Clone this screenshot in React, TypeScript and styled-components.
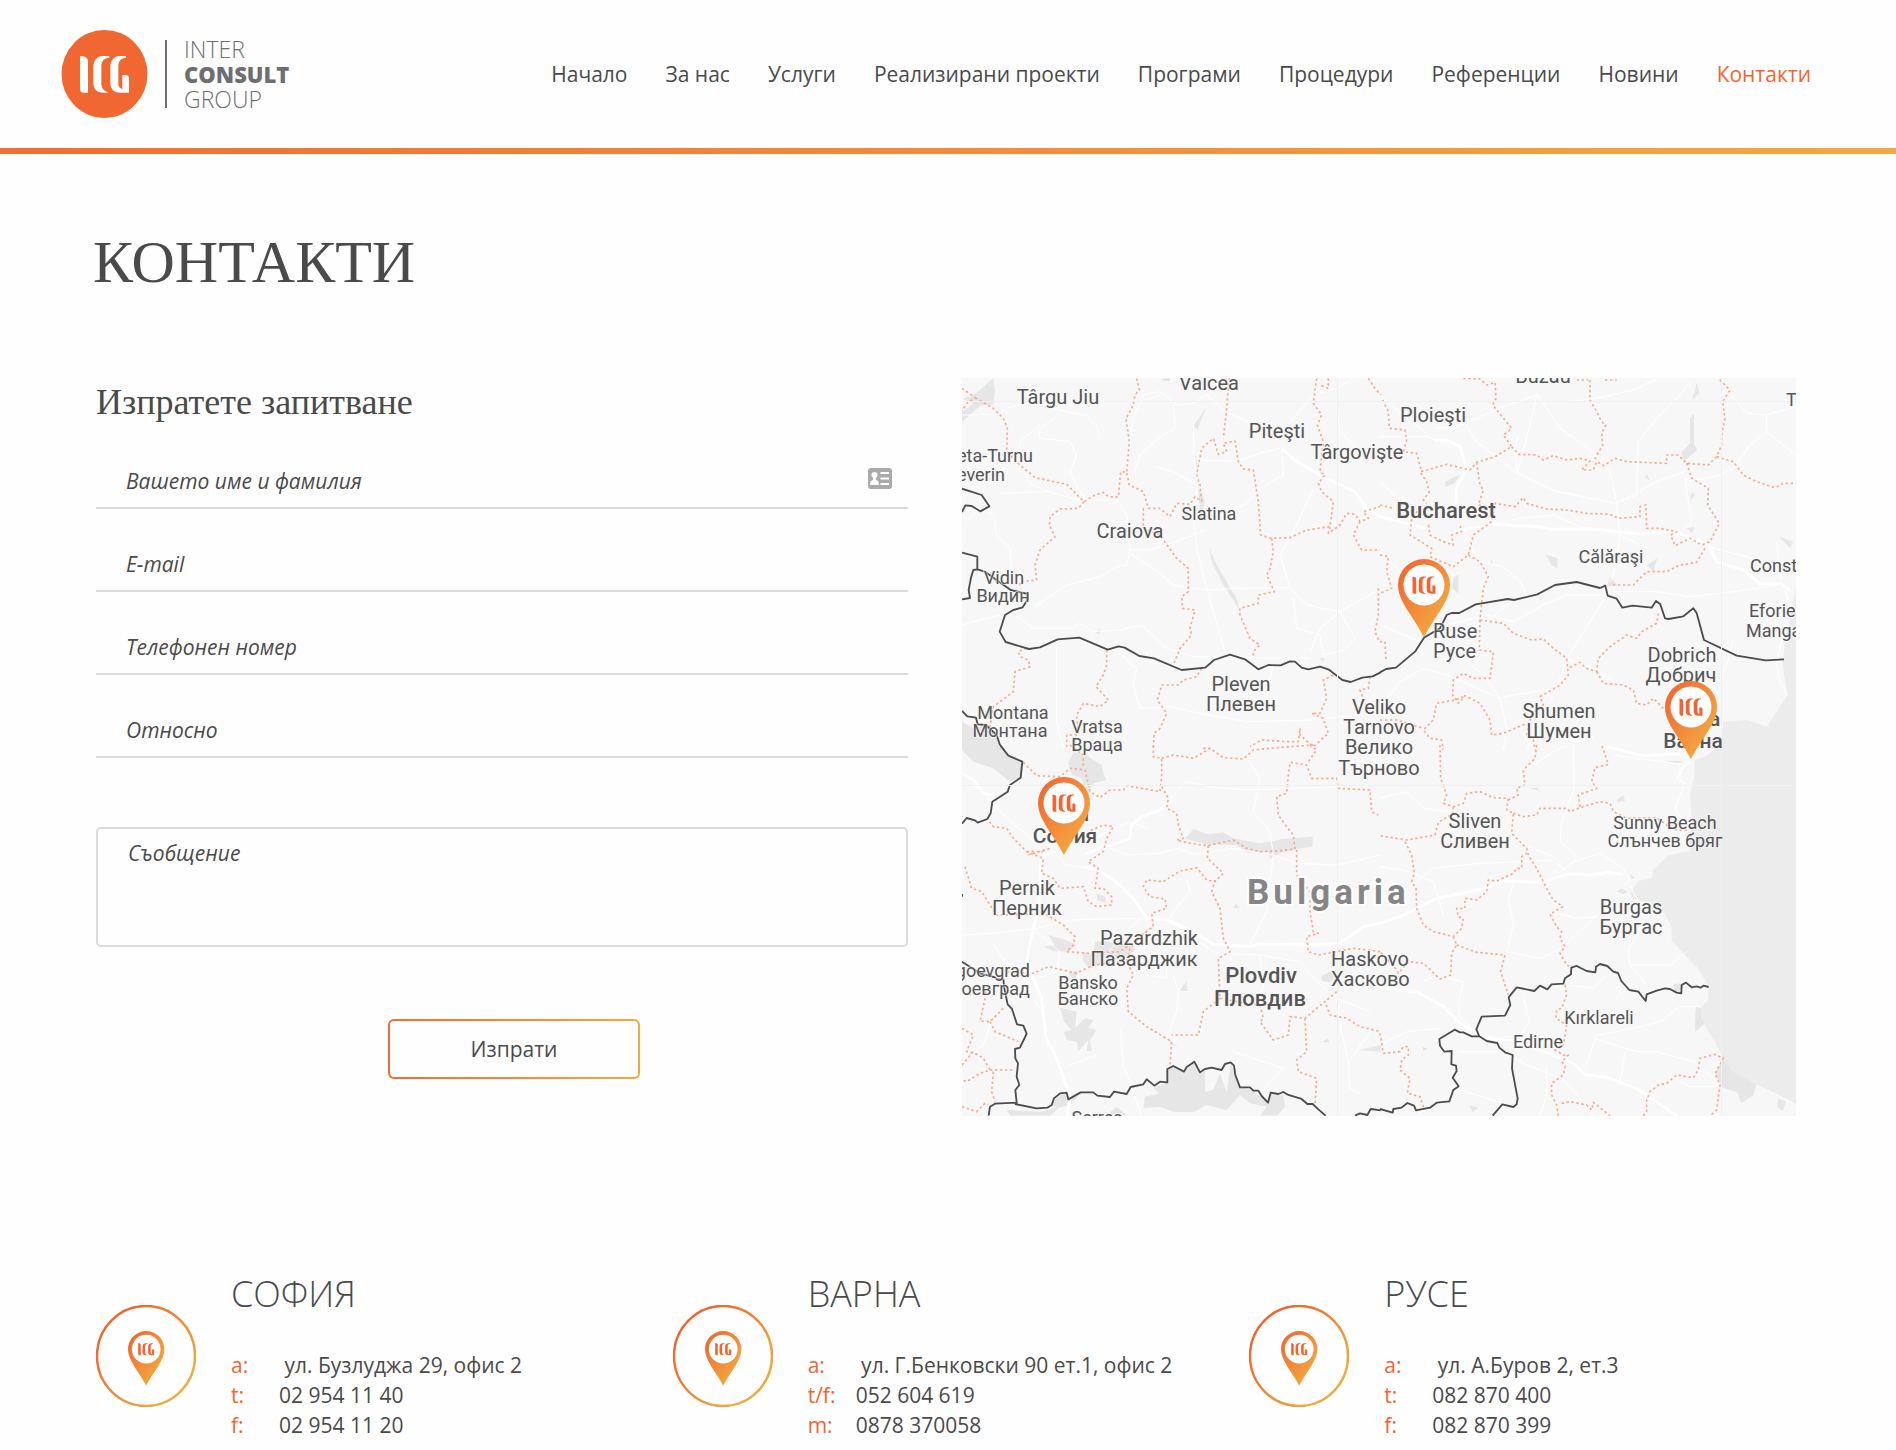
import React from "react";
import styled, { createGlobalStyle } from "styled-components";

const ink = "#4a4a4a";
const accent = "#f26531";
const line = "#dadada";
const sans = `"Open Sans", "Noto Sans", sans-serif`;
const serif = `"Liberation Serif", serif`;

const GlobalStyle = createGlobalStyle`
  *, *::before, *::after { box-sizing: border-box; }
  body {
    margin: 0;
    background: #fefefe;
    color: ${ink};
    font: 400 21px/30px ${sans};
  }
`;

const Header = styled.header`
  display: flex;
  align-items: center;
  justify-content: space-between;
  gap: 36px;
  min-height: 148px;
  padding: 0 85px 0 61px;
`;

const Rule = styled.div`
  height: 6px;
  background: linear-gradient(90deg, #f16d31, #f3a93f);
`;

const LogoLink = styled.a`
  display: flex;
  align-items: center;
  color: #6d6e72;
  text-decoration: none;
`;

const LogoBar = styled.span`
  width: 2px;
  height: 68px;
  margin: 0 17px;
  background: #6d6e72;
`;

const LogoWords = styled.span`
  display: flex;
  flex-direction: column;
  line-height: 25px;
`;

const LogoWord = styled.span<{ $heavy?: boolean }>`
  font-size: ${(p) => (p.$heavy ? 22 : 23)}px;
  font-weight: ${(p) => (p.$heavy ? 800 : 300)};
`;

const NavList = styled.ul`
  display: flex;
  flex-wrap: wrap;
  gap: 8px 38px;
  margin: 0;
  padding: 0;
  list-style: none;
`;

const NavLink = styled.a<{ $active?: boolean }>`
  color: ${(p) => (p.$active ? accent : ink)};
  text-decoration: none;
`;

const PageTitle = styled.h1`
  margin: 0;
  padding: 72px 93px 0;
  font: 400 60px/72px ${serif};
`;

const ContactArea = styled.section`
  display: grid;
  grid-template-columns: 812fr 834fr;
  gap: 54px;
  align-items: start;
  padding: 80px 100px 0 96px;
`;

const Form = styled.form`
  display: flex;
  flex-direction: column;
`;

const FormTitle = styled.h2`
  margin: 0;
  font: 400 36px/48px ${serif};
`;

const Field = styled.div`
  position: relative;
  display: flex;
  align-items: flex-end;
  height: 83px;
  padding: 0 16px 11px 30px;
  border-bottom: 2px solid ${line};
`;

const MessageField = styled.div`
  position: relative;
  display: flex;
  margin-top: 69px;
`;

/* Prompt that lies over an empty control and goes once there is a value. */
const Prompt = styled.label<{ $multiline?: boolean }>`
  position: absolute;
  left: ${(p) => (p.$multiline ? 32 : 30)}px;
  ${(p) => (p.$multiline ? "top: 11px;" : "bottom: 11px;")}
  font-style: italic;
  pointer-events: none;
`;

const Input = styled.input`
  flex: 1;
  min-width: 0;
  height: 30px;
  padding: 0;
  border: 0;
  outline: 0;
  background: none;
  color: ${ink};
  font: italic 400 21px/30px ${sans};
  &:not(:placeholder-shown) + label { visibility: hidden; }
`;

const FieldIcon = styled.svg`
  flex: none;
  width: 24px;
  height: 21px;
  margin-bottom: 7px;
`;

const Message = styled.textarea`
  flex: 1;
  height: 120px;
  padding: 9px 30px;
  border: 2px solid ${line};
  border-radius: 5px;
  outline: 0;
  resize: none;
  background: none;
  color: ${ink};
  font: italic 400 21px/30px ${sans};
  &:not(:placeholder-shown) + label { visibility: hidden; }
`;

const SendButton = styled.button`
  align-self: center;
  width: 252px;
  height: 60px;
  margin: 72px 0 0 24px;
  border: 2px solid transparent;
  border-radius: 6px;
  background:
    linear-gradient(#fefefe, #fefefe) padding-box,
    linear-gradient(90deg, #f16d31, #f3a93f) border-box;
  color: ${ink};
  font: 400 21px/30px ${sans};
  cursor: pointer;
`;

const MapSvg = styled.svg`
  display: block;
  width: 100%;
  height: auto;
  background: #f7f7f7;
`;

const Offices = styled.section`
  display: grid;
  grid-template-columns: repeat(3, 1fr);
  gap: 30px;
  padding: 154px 100px 8px 96px;
`;

const Office = styled.article`
  display: flex;
  align-items: flex-start;
  gap: 35px;
`;

const OfficeIcon = styled.svg`
  flex: none;
  width: 100px;
  height: 102px;
  margin-top: 35px;
`;

const OfficeName = styled.h3`
  margin: 0 0 32px;
  font: 300 36px/48px ${sans};
`;

const Details = styled.dl`
  display: grid;
  grid-template-columns: 48px auto;
  margin: 0;
`;

const Term = styled.dt`
  color: ${accent};
`;

const Value = styled.dd`
  margin: 0;
  white-space: pre;
`;

function Monogram() {
  return (
    <>
      <path d="M0 1C14 0 24 4 24 17V110H12C4 110 0 106 0 98Z" />
      <path d="M88 0H70C50 0 40 14 40 34V80C40 98 50 110 70 110H85C71 104 64 96 64 82V30C64 14 74 6 88 5Z" />
      <path d="M138 0H122C101 0 91 14 91 34V80C91 98 101 110 121 110H147V66C147 60 143 57 137 57H127V99C119 97 115 92 115 82V30C115 14 124 6 138 5Z" />
    </>
  );
}

function PinShape({ gradient }: { gradient: string }) {
  return (
    <>
      <path
        d="M26 0A26 26 0 0 1 52 26C52 42 37 57 26 78C15 57 0 42 0 26A26 26 0 0 1 26 0Z"
        fill={`url(#${gradient})`}
      />
      <circle cx="26" cy="26" r="20.500" fill="#fff" />
      <g transform="translate(14.500 17.500) scale(.156)" fill={accent}>
        <Monogram />
      </g>
    </>
  );
}

function PinGradient({ id }: { id: string }) {
  return (
    <linearGradient id={id} x1="0" y1="0" x2="1" y2="1">
      <stop offset="0.1" stopColor="#f16a31" />
      <stop offset="0.8" stopColor="#f3a640" />
    </linearGradient>
  );
}

type Anchor = "start" | "middle" | "end";
type Label = [string, number, number, number, Anchor?, boolean?];

const labels: Label[] = [
  ["Târgu Jiu", 96, 26, 20],
  ["Vâlcea", 247, 12, 20],
  ["Piteşti", 315, 60, 20],
  ["Târgovişte", 395, 81, 20],
  ["Ploieşti", 471, 44, 20],
  ["Buzău", 581, 5, 20],
  ["T", 824, 28, 18, "start"],
  ["eta-Turnu", 71, 84, 18, "end"],
  ["everin", 43, 103, 18, "end"],
  ["Slatina", 247, 142, 18],
  ["Craiova", 168, 160, 20],
  ["Bucharest", 484, 140, 22, "middle", true],
  ["Călăraşi", 649, 185, 18],
  ["Const", 788, 194, 18, "start"],
  ["Eforie", 787, 239, 18, "start"],
  ["Manga", 784, 259, 18, "start"],
  ["Vidin", 42, 206, 18],
  ["Видин", 41, 224, 18],
  ["Ruse", 471, 260, 20, "start"],
  ["Русе", 471, 280, 20, "start"],
  ["Dobrich", 720, 284, 20],
  ["Добрич", 719, 304, 20],
  ["Pleven", 279, 313, 20],
  ["Плевен", 279, 333, 20],
  ["Montana", 51, 341, 18],
  ["Монтана", 48, 359, 18],
  ["Vratsa", 135, 355, 18],
  ["Враца", 135, 373, 18],
  ["Veliko", 417, 336, 20],
  ["Tarnovo", 417, 356, 20],
  ["Велико", 417, 376, 20],
  ["Търново", 417, 397, 20],
  ["Shumen", 597, 340, 20],
  ["Шумен", 597, 360, 20],
  ["Varna", 731, 348, 21, "middle", true],
  ["Варна", 731, 370, 21, "middle", true],
  ["Sofia", 103, 443, 21, "middle", true],
  ["София", 103, 465, 21, "middle", true],
  ["Sliven", 513, 450, 20],
  ["Сливен", 513, 470, 20],
  ["Sunny Beach", 703, 451, 18],
  ["Слънчев бряг", 703, 469, 18],
  ["Burgas", 669, 536, 20],
  ["Бургас", 669, 556, 20],
  ["Pernik", 65, 517, 20],
  ["Перник", 65, 537, 20],
  ["Pazardzhik", 187, 567, 20],
  ["Пазарджик", 182, 588, 20],
  ["goevgrad", 68, 599, 18, "end"],
  ["оевград", 68, 617, 18, "end"],
  ["Bansko", 126, 611, 18],
  ["Банско", 126, 627, 18],
  ["Plovdiv", 299, 605, 22, "middle", true],
  ["Пловдив", 298, 628, 22, "middle", true],
  ["Haskovo", 369, 588, 20, "start"],
  ["Хасково", 369, 608, 20, "start"],
  ["Kırklareli", 637, 646, 18],
  ["Edirne", 576, 670, 18],
  ["Serres", 135, 746, 18],
];

const MapText = styled.text<{ $size: number; $bold?: boolean }>`
  font-family: Roboto, sans-serif;
  font-size: ${(p) => p.$size}px;
  font-weight: ${(p) => (p.$bold ? 500 : 400)};
  fill: #555;
  stroke: #f7f7f7;
  stroke-width: 2px;
  stroke-opacity: 0.6;
  paint-order: stroke;
`;

const CountryText = styled.text`
  font: 700 35px Roboto, sans-serif;
  letter-spacing: 4px;
  fill: #858585;
  stroke: #fff;
  stroke-width: 4px;
  paint-order: stroke;
`;

interface Tile {
  at: string;
  sea?: string;
  relief: string;
  roads: string;
  highways: string;
  regions: string;
  borders: string;
}

/* Four map tiles, each drawn at three units to the pixel. */
const tiles: Tile[] = [
  {
    at: "translate(-2 -3) scale(.33333)",
    relief:
      "M6 140V112L40 85L8 72L48 55L100 10L105 50L100 88L60 92ZM740 92L700 150L712 165ZM702 210L712 270L716 340L735 375L722 440L712 300ZM748 520L770 570L800 620L830 670L860 780L836 700L790 630L755 560ZM404 776L420 760V776ZM1080 850L1095 850L1088 860ZM6 1040L40 1060L80 1050L112 1085L122 1125H6ZM605 10H630V18H610Z",
    roads:
      "M6 120L120 118L140 100L220 80L310 108L380 122L412 155L418 190M290 125L235 165L240 190L330 200L350 240L330 290L360 350L380 375L470 375L500 420L510 525L500 570L470 575L420 605L320 630L225 695M120 355L265 350L210 325L175 250L180 200L240 150M265 350L370 378M500 285L520 130L550 60L600 50L650 90L700 85L740 60L790 105L860 140L940 200M740 92L700 150L702 240L712 330L700 420L710 520L740 640L795 830M510 525L570 525L650 500L735 465M510 535L580 580L640 630L740 645L840 640L990 638M600 60L560 75M640 90L645 160L600 185L540 240L520 300M960 220L900 235L830 258L720 256L710 330L640 290L590 275M965 225L970 300L900 340L860 385L780 425M990 640L960 540L1010 450L1060 340M990 640L1040 690L1140 710L1185 790L1150 825L1090 840L1080 780L1010 760L1000 670M1140 710L1262 640M1140 710L1080 760L1050 830M165 720L220 760L340 760L358 745L400 770L480 765L545 750L620 820L700 845L830 848L1050 850M460 820L530 880L520 930L540 1000L630 995L720 1015L860 1040L1060 1035L1260 1010M290 810L290 1040L310 1125M940 870L920 950L900 1000M1130 90L1140 170L1200 230L1262 250M990 140L1060 60L1130 40L1180 10M20 440L60 400L100 420L110 480L150 520L155 610M6 750L120 720",
    highways: "M965 220L1010 260L1090 305L1185 350L1220 400L1262 425",
    regions:
      "M6 40L46 68L20 85L6 108M46 68L100 100L130 130L142 160L140 230L180 270L225 308L320 328L372 380L405 360L430 352L445 365L475 366L482 290L500 292L508 330L550 350L565 400L600 400L630 425L650 385L690 388L705 365L725 378L720 330L710 300L725 220L760 190L775 238L800 230L790 205L825 198L835 260L850 282L880 285L895 380L902 480L935 490L990 488L1040 465L1110 455L1120 380L1085 350L1075 325L1095 300L1080 290L1090 200L1072 150L1085 120L1060 85L1070 10M530 10L538 45L525 60L520 90L498 130L508 200L500 292M808 10L798 120L790 190M372 380L355 400L300 402L270 425L268 450L285 485L240 525L225 570L230 615L180 620V640M550 400V460L600 480L650 550L685 580V650L665 665L668 700L705 705L690 760L695 780L660 820L640 870M935 490L940 530L930 580L920 600L943 650L895 660V685L840 700L838 715L870 790L900 810L880 830V850M1110 455L1105 475L1140 450L1160 415L1185 418L1200 440L1225 430L1210 410L1260 395M1200 440L1180 480L1205 525L1260 525M1255 640V720L1245 770L1258 800M200 820L175 830L180 845L205 855L210 875L165 890L160 950L100 995L90 1055M440 825V870L430 900L408 935L445 975L420 995L370 985L350 1020L355 1080L320 1080V1125M725 880L710 905L670 915L655 930L605 930L592 975L620 1015L600 1060L582 1075L580 1125M1120 900L1090 915L1100 970L1080 1015H1055L1090 1030L1105 1075L1060 1115L1020 1080V1060L1015 1100L985 1100L905 1095L870 1115M1230 905L1225 940L1200 945L1215 985L1240 1010M1105 10V40L1080 30M1225 10L1245 40L1262 60M730 1120H750",
    borders:
      "M6 533L52 545V583L75 590L152 645L204 657V672L188 697L160 705L135 720L119 770L137 801L207 822L240 817L293 793L358 788L443 824L476 814L494 818L538 843L582 850L665 885L736 878L762 855L810 839L855 853L895 883L925 870L962 871L990 859L1005 860L1025 878L1045 883L1080 875L1107 884L1147 915L1172 921L1207 908L1238 904L1262 892M6 341L65 360L88 394L61 409L35 393L16 391L6 411M6 673L30 669L26 645L33 608L40 585L52 583M6 1008L22 1024L48 1028L53 1048L78 1050L110 1080L120 1110L132 1125",
  },
  {
    at: "translate(418 -3) scale(.33333)",
    sea: "M1248 640L1235 700L1215 800L1208 870L1222 960L1190 1010L1160 1055L1100 1035L1030 1040L1022 1125H1248Z",
    relief:
      "M950 25L958 55L935 75L945 45ZM930 130L942 115V205L952 225L910 260L905 230L930 205ZM195 320L240 298L225 325L197 335ZM495 538L532 550V580L515 570ZM800 298L812 318L795 310ZM1198 485L1240 500L1230 520ZM690 605L712 630L680 635ZM222 605L235 600V655L215 640ZM800 570L832 550L820 590ZM335 550L338 570H332ZM935 350L945 360L930 380ZM920 460L945 455L935 475Z",
    roads:
      "M0 185H145L165 195M145 180L70 120L0 60M165 160L230 155L360 100L470 60L450 150L412 295L290 200L260 155M412 295L530 350L710 385L830 320L915 290M412 295L405 230L415 180M470 55L540 160L620 215L690 290L710 385L770 360L775 200L830 130L900 60L930 20M1025 25L1100 115L1160 120L1248 95M1160 120V170L1110 210L1060 280L1020 300L930 320L915 310L935 440L900 470M1160 170L1248 240M565 80L650 70L760 45L830 12M710 385L720 490L700 600L690 620M345 445L420 430L520 420L610 460L700 470L800 520M245 465L300 560L370 575L420 620L440 660M660 660L560 660L490 690L400 740L320 720L200 750L120 800L0 750M400 675L320 740L300 720M700 650L830 650L930 665L1060 650L1200 630M680 660L630 740L560 850L530 940L400 960L360 970L310 900L250 850L150 800M0 1000L60 920L130 880L200 900L360 970L380 1060L370 1125M530 940L490 1020L440 1125M560 850L640 880L720 930L760 960M530 350L600 360M0 320L60 375M0 530L60 590M1190 500L1200 600L1230 690L1190 860L1200 920L1222 960M1060 790L1040 870L1000 940L960 1000M985 515L1190 570",
    highways:
      "M165 197L205 197L240 215L260 280L230 340L230 385M245 465L340 448L480 455L510 463L640 462L780 478L880 468L985 510L1010 560L1090 585L1140 627L1200 625L1230 645M0 425L60 440L140 460M540 1085L600 1100L640 1085",
    regions:
      "M250 10L300 12L320 30L345 22L348 70L338 90L395 160L370 180L395 215L345 245L290 262L270 285L200 268L140 285L120 290L140 320L148 350L130 375L140 385M395 215L415 238L470 240L490 255L520 242L560 255L600 250L630 258L605 285H640L650 260L672 272L705 250L740 260L860 265V240L895 240L920 265L985 270L1010 245L1025 210V180L1035 130L1028 80L1050 45L1015 10M630 15V75L650 110L665 140L678 150L665 175L668 210L640 260M920 265L935 310L985 340L983 390L1018 445L990 500L965 510L930 490L885 512L872 480L890 470L840 460L800 460L798 390L780 395V425L715 430L690 418L620 415L560 405L500 402L440 385L430 368L405 395L345 385L335 440L280 480L265 540L220 575L150 545L155 520L90 480L95 430L120 400M1010 245L1060 260L1090 300L1130 320L1185 338L1210 325H1248M290 262L300 330L310 345L295 390L350 400M8 75L25 110L28 160L75 165L80 195L70 230L110 235L125 290M265 540L300 560L325 605L310 640L300 735L370 745L400 775L455 795L490 792L520 820L560 850L565 900L540 930L480 965L490 990L465 1010L450 1035L440 1080L460 1095L465 1125M975 520L950 562L900 570L860 590L800 590L760 630H690M835 715L830 745L785 770L770 790L740 780L690 815L655 850L650 890L620 880L600 862L565 880M650 890L670 925L730 930L760 945L770 985L800 990L820 970L850 1000M300 735L298 825L340 830L330 910H280L250 895L220 915L218 960L235 985L255 962L300 985L330 1035L335 1080L370 1075L440 1045M250 965L225 975L170 985L160 1035L130 1065L150 1090L185 1095L190 1125M145 450L150 480L190 500L220 510L215 480L245 470L240 450M0 540L25 545L20 590L35 640L0 655M0 390L40 400M0 800H15L18 860M590 15H625M675 15H710M0 1035H50L130 1060",
    borders:
      "M0 892L18 882L48 878L105 830L132 788L180 760L200 720L215 714H238L287 688L383 672L402 675L472 658L525 630L590 621L660 639L676 632L683 662L710 671L727 698L758 692L815 698L828 678L841 688L855 730L866 732L910 724L940 700L950 714L972 795L1070 842L1157 856L1212 853",
  },
  {
    at: "translate(-2 367) scale(.33333)",
    relief:
      "M6 0H122L145 32L187 50L182 98L150 110L100 70L40 50L6 15ZM340 22L372 25L400 45L425 60L432 90L440 105L400 115L385 145L365 100L335 90L325 55ZM700 252L745 268L790 262L820 280L900 295L930 290L970 282L1058 275V305L1010 312L960 325L930 342L925 320L860 322L830 300L740 298L675 282ZM252 605L285 600L265 570L318 585L350 600L325 620L280 618ZM365 620L400 630L405 590L440 590L525 605L520 630L440 655L390 670L370 650ZM325 685L355 675L345 715ZM300 788L350 800L345 850L375 820L400 825L385 850L410 855L390 885L395 918L380 918L385 885L355 918L350 890L320 885L312 860L335 855L312 830ZM410 445L435 455L440 475L412 465ZM660 738L680 706L682 738ZM1083 695L1110 680L1125 695L1110 712L1088 708ZM820 490L828 476L838 490ZM1088 892L1100 880L1110 892ZM1200 915L1262 900V920ZM605 870L655 905L640 900ZM622 975L640 963L672 980L703 950L720 982L735 978V1040L760 1035L780 985L800 1045L812 952L826 990L840 1027L880 1037L924 1073L932 1043L970 1050L975 1085L950 1112H900L920 1085L870 1075L840 1050L800 1095L740 1080L700 1102L640 1100L600 1085L550 1090L555 1055L600 1045L580 1030L622 1012ZM300 1045L320 1043L325 1063L362 1045L330 1080L290 1090L275 1080ZM140 1095L240 1100L300 1085L270 1112H150ZM470 1085L500 1110H440Z",
    roads:
      "M6 570L100 565L230 550L330 525L540 520M290 330L320 360L370 368M250 320L200 270L110 190L60 130L20 120M620 175L680 110L750 125L860 135L1130 125M370 330L430 300L500 330L600 325L650 310L700 328L760 320L820 310L940 330L1010 355L1130 360L1262 330M540 520L480 580L430 640L400 700M600 530L550 610L480 640L440 660M700 580L770 625L900 630L1020 650L1060 700L1130 760L1230 800M640 690L655 740L650 800L620 880M900 630L910 720L895 780M870 600L920 500L940 330L930 260L880 200L900 100L860 40M230 560L300 620L290 680L230 700M250 800L200 740L100 600M480 850L490 960L530 1070L545 1112M820 920L880 940L970 970L930 1010L900 1050M1130 760L1145 860L1165 950L1170 1030L1200 1045M1165 950L1240 850M6 960L70 900L90 840M560 250L510 230L420 270L390 300M680 400L690 440L640 500L620 540M1262 640L1180 700L1120 760M410 930L330 960M520 630L510 680L620 700V640",
    highways:
      "M6 85L40 105L70 145L105 150M620 178L600 195L545 215L515 240L510 280L470 295L380 325M280 320L245 335L238 430L235 490L215 570L200 650L245 760L258 880L290 940L330 1055L322 1112M370 365L420 378L480 420L520 460L560 520L620 525L700 560L760 598L870 605L900 598L1080 600L1140 595L1210 545L1262 535",
    regions:
      "M190 52L230 92L300 95L330 70L375 75L390 140L420 158L450 135L490 135L500 122L600 140L605 95V40L580 35V0M605 125L625 160L620 190L650 205L655 240L670 280L650 285L690 295L745 302L820 285L860 310L900 320L950 318L1005 312L1000 270L980 245L955 210L950 155L980 145L985 90L990 52L1040 60L1055 100L1130 100L1135 130L1230 135L1235 200L1255 210M605 40L640 30L700 40L750 10L790 38L850 42L880 15L930 10L1060 0M1050 0L1070 15L1045 50M745 302L742 340L790 385L765 410L740 405L710 368L660 378L610 410L560 405L550 425L570 455L615 462L620 490L575 505L580 545L550 565L510 610L500 650L520 690L500 730L505 800L560 845L635 890L630 960M765 405L755 440L780 490L790 580L810 620L775 640L780 760L730 800L715 870L635 870M1010 315L1010 390L1050 440V500L1060 560L1075 565L1040 575L1045 620L1075 630L1130 620L1180 610L1262 620M88 230L100 245L140 250L160 280L200 320L250 340L245 385L280 400L300 430L370 425L385 470L410 485L455 480V455L430 430H405L415 370L385 350L430 320L440 280L460 245L430 240L385 260M15 365L35 430L65 440L90 480L110 510L210 508L260 510L310 540L345 575L340 600L320 620L390 625L480 620L560 560M140 680L220 685L265 665L350 685L400 660L480 650M130 790L90 830L60 828L80 740L20 750M90 830L105 860L175 890M6 850L40 870L20 920L45 925L70 940L90 975L60 985L20 1010L6 1005M90 975L165 975M100 980L95 1040L105 1070M6 1085L50 1100L75 1075L85 1078M6 960L40 920M900 780L910 820L900 830L940 885L985 870L990 815L1035 820L1070 790L1095 770L1110 810L1160 820L1200 845L1262 860M1130 740L1095 770M1035 820L1040 920L1010 945L1015 980L1070 1000L1065 1080M780 760L830 770L910 782M200 320H250M205 330L270 310M330 0L370 30L370 70",
    borders:
      "M120 0L145 32L187 50L182 98L150 120L143 140L97 170L92 205L82 222L53 233L45 226L20 219L6 236M6 650L60 685L105 697L112 703H130L133 730L143 778L156 792L171 838L190 842L200 866L180 908L165 912L166 940L174 955L170 995L178 1020L166 1035L170 1073L105 1076L90 1085L86 1112M165 1077L230 1090L262 1088L275 1080L282 1060L300 1045L320 1043L325 1063L362 1042H400L412 1052L450 1056L462 1040L500 1047L512 1026L550 1018L560 1003L583 1022L600 1010L622 1012V972L640 963L672 980L680 966L703 950L720 982L735 972L755 968L785 975L795 957L812 952L822 962L826 990L840 1027H870L880 1037H895L905 1053L924 1073L932 1043L955 1047L970 1041L985 1050L1025 1062L1042 1077H1058L1075 1093L1097 1112M1185 1112L1200 1105L1222 1110L1232 1092L1262 1096M6 447V455",
  },
  {
    at: "translate(418 367) scale(.33333)",
    sea: "M1022 0L975 35L945 45L942 100L930 150L935 210L925 300L932 318L865 330L820 375L815 400L775 408L750 445L760 465L810 470L850 500L875 545V585L905 620L950 665L985 720V765L965 785L970 835L1005 890L1030 945L1060 980L1130 1018L1248 1075V0Z",
    relief:
      "M1030 940L1060 980L1130 1018L1120 1050L1085 1075L1070 1040L1030 1030L1005 985ZM948 785L965 790V820L975 835L945 860V835ZM1195 1060L1218 1070L1208 1098L1192 1085ZM710 440L725 430L742 440L730 448ZM750 388L765 398L755 402ZM880 718L905 715L900 740L885 738ZM710 165L730 150L735 168L712 172ZM450 130L470 128L482 145L470 135ZM268 1080L295 1088L278 1102ZM128 905L143 912L130 918ZM860 48H910L890 56Z",
    roads:
      "M0 460L60 450L160 370L300 355L430 350L520 345L560 380M0 365L80 378L160 410L190 510M540 380L580 350L660 325L730 370L750 410M545 360L530 340L460 310L400 280M520 380L600 390M400 420L385 460L400 540L380 620L480 640L545 610L640 520M510 500L590 520L650 515M580 0L583 130L545 230L540 290L600 340M700 30L850 50L910 60L890 100L915 115L885 190L910 230L870 290M460 60L520 20L560 0M0 160L80 140L130 190L210 200M750 420L790 500L780 560L745 610L750 660L800 720M640 520L700 460L740 450M750 660L870 660L920 620M300 870L240 820L235 780L250 710L170 690L130 710M430 760L450 830L420 870L350 880L320 870M640 880L770 920L830 920L940 950M655 870L760 850L840 830L900 785L960 785M650 870L610 980M735 920L720 1015M500 970V1050L480 1112M235 920L370 920L440 960L545 1000L600 1060L640 1112M110 1112L150 1080L240 1035L370 1075M0 900L80 860L180 850M940 950L1000 1000L1015 1025H930L870 990M700 770L740 730M680 690L640 730L560 720",
    highways:
      "M0 535L60 515L170 460L310 432L370 408L480 412L560 388L640 390L680 382L730 388M0 730L110 740L190 785L240 835L300 870L350 885L400 885L480 915L580 955L615 988L690 1000L770 1030L890 1112M660 0L720 15L790 32L900 28M930 50L905 70L900 90",
    regions:
      "M180 0L182 100L200 150L190 175L220 185L250 175L260 145L300 140L340 158L385 160L380 195L400 205L395 265L440 310L445 330L470 370L500 430L520 465L548 485L510 508L530 545L545 560L540 580L555 605L540 625L560 660L570 665M470 0L465 40L430 75L435 120L410 130L415 150L385 165M400 205L430 215L470 210L480 190L560 190L570 200L600 188L660 170L690 175L700 200L740 220L830 218L860 240L890 255H920M600 185L595 150L650 130L635 110L645 68L685 58L665 0M220 185V205L175 232L165 270L80 285L0 272M75 290L95 330L103 385L95 410L108 430L110 490L130 540L160 560L220 575L245 550L250 520L235 515L230 490H255V460L290 465L320 440L325 405L350 408L400 385L410 370H425V335L440 325M220 575L230 600L215 625L212 690L180 702L130 655L85 650L55 685L40 660L0 620M230 600L290 622L375 630L362 680L375 720L385 750M555 720L560 750L545 790L530 795L528 820L560 840L550 900L525 915L550 930H565L545 950L555 965L550 990L515 1015V1050L530 1080L535 1112M545 1075L570 1070L620 1080L635 1095L640 1072L690 1112M790 1112L800 1100V1065L810 1040L835 1020L860 1015L890 990L940 998L955 975L960 940L1005 928L1030 940L1005 985L1020 1020L1010 1095L990 1112M0 865L10 925L60 920L70 905H85V930L65 945L60 975L90 1000L82 1045L120 1055L132 1090",
    borders:
      "M0 1092L38 1103L40 1092L65 1088L82 1074L102 1082L108 1096L150 1088L170 1073L208 1069L220 1035L236 1024L218 998L230 978L228 962L214 958L215 918L193 920L180 902L178 882L224 854L240 862H250L275 874H298L289 853L305 815L375 812L391 780L386 757L410 727L463 738L480 722L502 733L515 718L550 716L555 700L573 688L574 668L590 663L620 678L646 682L648 665L660 657L682 663L700 680L714 684L724 708L748 735L775 740L797 768L800 748L830 737L855 730L870 732L890 743L904 745L905 720L918 713L935 727L950 724L962 728L970 722L986 726M298 874L320 888L352 894L358 908L375 922L398 930L396 970L413 1060L410 1078L400 1086L367 1078L338 1112",
  },
];

function RegionMap() {
  return (
    <MapSvg viewBox="0 0 834 738" role="img" aria-label="Карта на офисите">
      <defs>
        <PinGradient id="map-pin" />
      </defs>
      {tiles.map((t) => (
        <g key={t.at} transform={t.at} fill="none" strokeLinejoin="round">
          {t.sea && <path d={t.sea} fill="#ececec" />}
          <path d={t.relief} fill="#e6e6e6" />
          <path d={t.roads} stroke="#fff" strokeWidth="3" />
          <path d={t.highways} stroke="#fff" strokeWidth="9" />
          <path d={t.regions} stroke="#f5ab8c" strokeWidth="5" strokeDasharray="7 8" />
          <path d={t.borders} stroke="#4c4c4c" strokeWidth="5.500" />
        </g>
      ))}
      <path d="M375.500 0V738M759.500 0V738M0 23.500H834M0 407.500H834" stroke="#f0f0f0" />
      {labels.map(([text, x, y, size, anchor = "middle", bold]) => (
        <MapText key={text} x={x} y={y} textAnchor={anchor} $size={size} $bold={bold}>
          {text}
        </MapText>
      ))}
      <CountryText x="285" y="526">Bulgaria</CountryText>
      <g transform="translate(436 181)"><PinShape gradient="map-pin" /></g>
      <g transform="translate(703 303)"><PinShape gradient="map-pin" /></g>
      <g transform="translate(76 399)"><PinShape gradient="map-pin" /></g>
    </MapSvg>
  );
}

const navItems = [
  "Начало",
  "За нас",
  "Услуги",
  "Реализирани проекти",
  "Програми",
  "Процедури",
  "Референции",
  "Новини",
  "Контакти",
];

const fields = [
  { id: "name", label: "Вашето име и фамилия", type: "text", card: true },
  { id: "email", label: "E-mail", type: "email" },
  { id: "phone", label: "Телефонен номер", type: "tel" },
  { id: "subject", label: "Относно", type: "text" },
];

const offices = [
  {
    name: "СОФИЯ",
    rows: [["a:", " ул. Бузлуджа 29, офис 2"], ["t:", "02 954 11 40"], ["f:", "02 954 11 20"]],
  },
  {
    name: "ВАРНА",
    rows: [["a:", " ул. Г.Бенковски 90 ет.1, офис 2"], ["t/f:", "052 604 619"], ["m:", "0878 370058"]],
  },
  {
    name: "РУСЕ",
    rows: [["a:", " ул. А.Буров 2, ет.3"], ["t:", "082 870 400"], ["f:", "082 870 399"]],
  },
];

export default function App() {
  return (
    <>
      <GlobalStyle />
      <Header>
        <LogoLink href="#">
          <svg width="87" height="88" viewBox="0 0 87 88" aria-hidden="true">
            <ellipse cx="43.500" cy="44" rx="43" ry="44" fill="#f16731" />
            <g transform="translate(19 26) scale(.33333)" fill="#fff">
              <Monogram />
            </g>
          </svg>
          <LogoBar />
          <LogoWords>
            <LogoWord>INTER</LogoWord>
            <LogoWord $heavy>CONSULT</LogoWord>
            <LogoWord>GROUP</LogoWord>
          </LogoWords>
        </LogoLink>
        <nav>
          <NavList>
            {navItems.map((item) => (
              <li key={item}>
                <NavLink href="#" $active={item === "Контакти"}>{item}</NavLink>
              </li>
            ))}
          </NavList>
        </nav>
      </Header>
      <Rule />
      <main>
        <PageTitle>КОНТАКТИ</PageTitle>
        <ContactArea>
          <Form onSubmit={(e) => e.preventDefault()}>
            <FormTitle>Изпратете запитване</FormTitle>
            {fields.map((f) => (
              <Field key={f.id}>
                <Input id={f.id} type={f.type} placeholder=" " />
                <Prompt htmlFor={f.id}>{f.label}</Prompt>
                {f.card && (
                  <FieldIcon viewBox="0 0 24 21" aria-hidden="true">
                    <rect width="24" height="21" rx="3" fill="#aaa" />
                    <circle cx="6.500" cy="7" r="3" fill="#fff" />
                    <path d="M5 9H8V12C10 12.500 11 14 11 17H2C2 14 3 12.500 5 12Z" fill="#fff" />
                    <path d="M12.500 5H21M12.500 10.500H21M12.500 16H21" stroke="#fff" strokeWidth="2" />
                  </FieldIcon>
                )}
              </Field>
            ))}
            <MessageField>
              <Message id="message" placeholder=" " />
              <Prompt htmlFor="message" $multiline>Съобщение</Prompt>
            </MessageField>
            <SendButton type="submit">Изпрати</SendButton>
          </Form>
          <RegionMap />
        </ContactArea>
        <Offices>
          {offices.map((office, i) => (
            <Office key={office.name}>
              <OfficeIcon viewBox="0 0 100 102" aria-hidden="true">
                <defs>
                  <PinGradient id={`office-pin-${i}`} />
                  <linearGradient id={`office-ring-${i}`} x1="0" y1="0" x2="1" y2="1">
                    <stop offset="0.2" stopColor="#f0652f" />
                    <stop offset="0.8" stopColor="#ecaa3c" />
                  </linearGradient>
                </defs>
                <ellipse cx="50" cy="51" rx="49" ry="50" fill="none" stroke={`url(#office-ring-${i})`} strokeWidth="2.500" />
                <g transform="translate(32 26) scale(.7)">
                  <PinShape gradient={`office-pin-${i}`} />
                </g>
              </OfficeIcon>
              <div>
                <OfficeName>{office.name}</OfficeName>
                <Details>
                  {office.rows.map(([term, value]) => (
                    <React.Fragment key={term}>
                      <Term>{term}</Term>
                      <Value>{value}</Value>
                    </React.Fragment>
                  ))}
                </Details>
              </div>
            </Office>
          ))}
        </Offices>
      </main>
    </>
  );
}
